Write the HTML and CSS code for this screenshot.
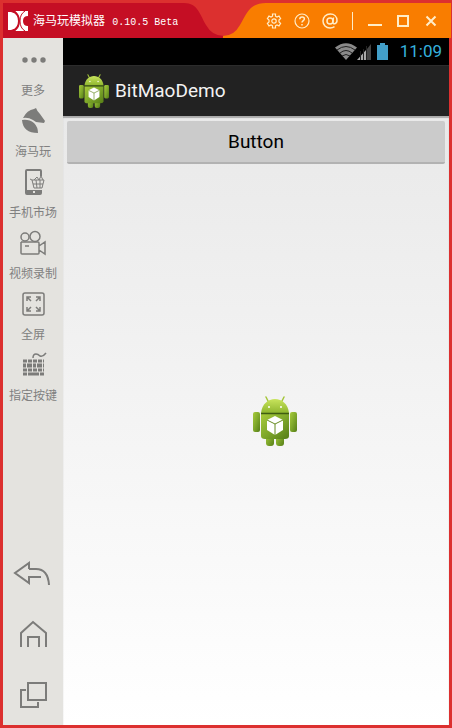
FILE: index.html
```html
<!DOCTYPE html>
<html lang="zh-CN">
  <head>
    <meta charset="UTF-8" />
    <meta name="viewport" content="width=device-width, initial-scale=1" />
    <title>海马玩模拟器</title>
    <link rel="stylesheet" href="styles.css">
  </head>
  <body>
    <!-- Shared android robot -->
    <svg class="defs" aria-hidden="true">
      <defs>
        <linearGradient id="green" x1="0" y1="0" x2="1" y2="1">
          <stop offset="0" stop-color="#a8cb3a" />
          <stop offset="0.5" stop-color="#7fa82b" />
          <stop offset="1" stop-color="#557d16" />
        </linearGradient>
        <linearGradient id="head" x1="0" y1="0" x2="0" y2="1">
          <stop offset="0" stop-color="#c8e45c" />
          <stop offset="1" stop-color="#8fb62f" />
        </linearGradient>
        <symbol id="robot" viewBox="0 0 44 50">
          <path d="M13 1l3 6M31 1l-3 6" stroke="#a5c63b" stroke-width="1.5" stroke-linecap="round" />
          <rect x="13" y="36" width="8" height="14" rx="3" fill="url(#green)" />
          <rect x="23" y="36" width="8" height="14" rx="3" fill="url(#green)" />
          <rect x="0" y="16" width="7" height="20" rx="2" fill="url(#green)" />
          <rect x="37" y="16" width="7" height="20" rx="2" fill="url(#green)" />
          <path d="M8 18h28v22q0 3-4 3H12q-4 0-4-3z" fill="url(#green)" />
          <path d="M8 17C9 8 15 3 22 3s13 5 14 14z" fill="url(#head)" />
          <path d="M8 17.500h28" stroke="#3f5d12" stroke-width="1.500" />
          <circle cx="16" cy="11" r="1" fill="#fff" />
          <circle cx="28" cy="11" r="1" fill="#fff" />
          <path d="M22 20l8 4v10l-8 5-8-5V24z" fill="#fff" />
          <path d="M14 24l8 4 8-4M22 28v11" fill="none" stroke="#678c22" />
        </symbol>
      </defs>
    </svg>

    <div class="window">
      <header class="titlebar">
        <div class="brand">
          <svg class="logo" viewBox="0 0 20 20" aria-hidden="true">
            <path d="M0 1h3q8 2 8 9t-8 9H0z" fill="#fff" />
            <path d="M7 0h13v5q-5 0-5 5t5 5v5H7q4-3 4-10T7 0z" fill="#fff" />
            <path d="M5 0q6 3 6 10T5 20" fill="none" stroke="#c50e24" stroke-width="2" />
            <path d="M17 0q-5 3-5 10t5 10" fill="none" stroke="#c50e24" stroke-width="1" />
          </svg>
          <h1>海马玩模拟器 <span>0.10.5 Beta</span></h1>
        </div>
        <svg class="swoosh" viewBox="0 0 88 35" aria-hidden="true">
          <path d="M0 0h6C20 0 22 12 28 22Q34 33 46 33v2H0z" fill="#c50e24" />
          <path d="M88 0C72 0 69 10 62 22Q56 33 45 33v2h43z" fill="#f97d00" />
        </svg>
        <div class="tools">
          <button aria-label="设置">
            <svg viewBox="0 0 16 16"><path d="M6.500 1h3v2.200l1.500.8 2-1 1.600 2.700L13 7v2l1.600 1.300L13 13l-2-1-1.500.8V15h-3v-2.200L5 12l-2 1-1.600-2.700L3 9V7L1.400 5.700 3 3l2 1 1.500-.8z" stroke-width="1.200" /><circle cx="8" cy="8" r="2.200" stroke-width="1.200" /></svg>
          </button>
          <button aria-label="帮助">
            <svg viewBox="0 0 16 16"><circle cx="8" cy="8" r="7" stroke-width="1.200" /><path d="M5.800 6.200c0-3 4.600-2.800 4.600-.2 0 1.600-2.400 1.700-2.400 3.600M8 11v1.500" stroke-width="1.500" /></svg>
          </button>
          <button aria-label="联系">
            <svg viewBox="0 0 16 16"><circle cx="8" cy="8" r="3" stroke-width="1.500" /><path d="M11.500 4.500L10.800 9c0 3 4.200 2 4.200-1.500C15 3.500 12 1 8.300 1 4 1 1 4 1 8s3 7 7 7q2.500 0 4.500-1.300" stroke-width="1.500" /></svg>
          </button>
          <span class="divider"></span>
          <button aria-label="最小化">
            <svg viewBox="0 0 16 16"><path d="M1 12h14" stroke-width="2" /></svg>
          </button>
          <button aria-label="最大化">
            <svg viewBox="0 0 16 16"><path d="M3 3h10v10H3z" stroke-width="2" /></svg>
          </button>
          <button aria-label="关闭">
            <svg viewBox="0 0 16 16"><path d="M3.500 3.500l9 9M12.500 3.500l-9 9" stroke-width="2" /></svg>
          </button>
        </div>
      </header>

      <div class="body">
        <aside class="sidebar">
          <nav class="menu">
            <button>
              <svg viewBox="0 0 28 24" class="solid"><circle cx="6" cy="12" r="2.700" /><circle cx="15" cy="12" r="2.700" /><circle cx="24" cy="12" r="2.700" /></svg>
              更多
            </button>
            <button>
              <svg viewBox="0 0 28 24" class="solid"><path d="M4 9Q8 1 15 0l2-1q1 3 4 6l5 7-1 2-8-1-3-2q-5-3-10-2zM3 11q7-1 12 3 4 4 4 10Q4 24 3 11z" /></svg>
              海马玩
            </button>
            <button>
              <svg viewBox="0 0 28 24"><path d="M22 6V1q0-1-1-1H8Q7 0 7 1v22q0 1 1 1h13q1 0 1-1v-3" stroke-width="2" /><path d="M7 22h15" stroke-width="4" /><path d="M11 9l2 1 2 8h8l2-8H13M14 14h10M17 10l1 8M21 10v8M15 10l3-3 2 3 2-4 2 4" /><path d="M14 22h2" stroke="#e4e3df" stroke-width="2" /></svg>
              手机市场
            </button>
            <button>
              <svg viewBox="0 0 28 24"><circle cx="6" cy="6" r="4" stroke-width="1.500" /><circle cx="16" cy="5.500" r="5" stroke-width="1.500" /><path d="M2 11h17q1 0 1 1v10q0 1-1 1H3q-1 0-1-1V11M20 15l6-4v12l-6-4M6 15h4" stroke-width="1.500" /></svg>
              视频录制
            </button>
            <button>
              <svg viewBox="0 0 28 24"><rect x="4" y="1" width="21" height="22" rx="2" stroke-width="1.500" /><path d="M8 9V5h4M8 5l4 4M17 5h4v4M21 5l-4 4M8 15v4h4M8 19l4-4M17 19h4v-4M21 19l-4-4" stroke-width="1.500" /></svg>
              全屏
            </button>
            <button>
              <svg viewBox="0 0 28 24"><path d="M14 5q0-4 3-4 2 0 4 2 3 1 6-3" stroke-width="1.500" /><path d="M4 8h21M4 17h21" stroke-width="3" stroke-dasharray="4 1" /><path d="M4 12.500h21" stroke-width="4" stroke-dasharray="3 1 5 1" /><path d="M4 21h4M9 21h11M21 21h4" stroke-width="3" /></svg>
              指定按键
            </button>
          </nav>
          <nav class="keys">
            <button aria-label="返回">
              <svg viewBox="0 0 38 28"><path d="M17 10V4L3 14l14 10v-6h12M17 10h7q12 0 13 16" /></svg>
            </button>
            <button aria-label="主页">
              <svg viewBox="0 0 38 28"><path d="M9 27V13L21 2l13 11v14M16 27V17h11v10" /></svg>
            </button>
            <button aria-label="最近任务">
              <svg viewBox="0 0 38 28"><path d="M16 2h18v17H16zM14 9H9v17h17v-5" /></svg>
            </button>
          </nav>
        </aside>

        <main class="phone">
          <div class="status">
            <svg class="wifi" viewBox="0 0 22 17" aria-hidden="true"><path d="M0 4.500Q11-4 22 4.500L11 17z" fill="#8a8a8a" /><path d="M2 7q9-7 18 0M5 10q6-5 12 0M7 13q4-3 8 0" fill="none" stroke="#222" /></svg>
            <svg class="signal" viewBox="0 0 14 17" aria-hidden="true"><path d="M0 17L9 7v10z" fill="#aaa" /><path d="M10 6l4-5v16h-4z" fill="#444" /><path d="M3.500 17V8M6.500 17V6M9.500 17V3" stroke="#222" /></svg>
            <svg class="battery" viewBox="0 0 11 17" aria-hidden="true"><path d="M3 0h5v2h3v15H0V2h3z" fill="#429fc9" /></svg>
            <time>11:09</time>
          </div>
          <div class="actionbar">
            <svg class="app-icon"><use href="#robot" /></svg>
            <h2>BitMaoDemo</h2>
          </div>
          <div class="screen">
            <button class="android-button">Button</button>
            <svg class="picture" role="img" aria-label="Android"><use href="#robot" /></svg>
          </div>
        </main>
      </div>
    </div>
  </body>
</html>
```
FILE: styles.css
```css
* {
  box-sizing: border-box;
}

body {
  margin: 0;
  font-family: "Noto Sans CJK SC", sans-serif;
}

h1,
h2 {
  margin: 0;
  font-weight: normal;
}

button {
  border: 0;
  padding: 0;
  background: none;
  font: inherit;
  color: inherit;
}

svg {
  display: block;
  flex: none;
}

.defs {
  position: absolute;
  width: 0;
  height: 0;
}

.window {
  display: flex;
  flex-direction: column;
  min-height: 100vh;
  border: 3px solid #dc302f;
}

/* Title bar */
.titlebar {
  display: flex;
  height: 35px;
  background: #dc302f;
}

.brand {
  display: flex;
  align-items: center;
  gap: 5px;
  padding-left: 5px;
  width: 179px;
  background: #c50e24;
  color: #fff;
}

.logo {
  width: 20px;
  height: 20px;
}

.brand h1 {
  padding-top: 4px;
  font-size: 12px;
  line-height: 16px;
  white-space: nowrap;
  font-family: "Liberation Mono", "Noto Sans CJK SC", monospace;
}

.brand span {
  font-size: 10px;
}

.swoosh {
  width: 88px;
  height: 35px;
}

.tools {
  flex: 1;
  display: flex;
  align-items: center;
  justify-content: flex-end;
  gap: 12px;
  padding-right: 12px;
  background: #f97d00;
}

.tools svg {
  width: 16px;
  height: 16px;
  fill: none;
  stroke: #ffedc8;
}

.divider {
  width: 1px;
  height: 18px;
  margin: 0 2px;
  background: #ffedc8;
}

.body {
  flex: 1;
  display: flex;
}

/* Side toolbar */
.sidebar {
  display: flex;
  flex-direction: column;
  justify-content: space-between;
  width: 60px;
  padding: 10px 0 16px;
  background: #e4e3df;
  color: #808080;
}

.menu {
  display: flex;
  flex-direction: column;
  gap: 11px;
}

.menu button {
  display: flex;
  flex-direction: column;
  align-items: center;
  gap: 10px;
  font-size: 12px;
  line-height: 16px;
}

.sidebar svg {
  fill: none;
  stroke: #7c7c7a;
  overflow: visible;
}

.menu svg {
  width: 28px;
  height: 24px;
}

.sidebar .solid {
  fill: #7c7c7a;
  stroke: none;
}

.keys {
  display: flex;
  flex-direction: column;
  gap: 33px;
  padding-left: 9px;
}

.keys svg {
  width: 38px;
  height: 28px;
  stroke-width: 2;
}

/* Android screen */
.phone {
  flex: 1;
  display: flex;
  flex-direction: column;
  font-family: Roboto, sans-serif;
}

.status {
  display: flex;
  align-items: center;
  justify-content: flex-end;
  height: 27px;
  padding-right: 7px;
  background: #000;
  color: #35b1dd;
}

.wifi {
  width: 22px;
  height: 17px;
}

.signal {
  width: 14px;
  height: 17px;
}

.battery {
  width: 11px;
  height: 17px;
  margin: 0 12px 0 6px;
}

.status time {
  font-size: 17px;
  line-height: 27px;
}

.actionbar {
  display: flex;
  align-items: center;
  gap: 6px;
  height: 51px;
  padding-left: 16px;
  background: #222;
  border-top: 1px solid #2c2c2c;
  color: #f3f3f3;
}

.app-icon {
  width: 30px;
  height: 34px;
}

.actionbar h2 {
  font-size: 19px;
  line-height: 24px;
}

.screen {
  flex: 1;
  display: grid;
  padding: 5px 4px 0;
  background: linear-gradient(#e9e9e9, #fff);
  box-shadow: inset 0 2px 1px #aaa;
}

.android-button {
  grid-area: 1 / 1;
  align-self: start;
  height: 43px;
  background: #cbcbcb;
  border-bottom: 2px solid #b2b2b2;
  border-radius: 2px;
  font-size: 19px;
  color: #000;
}

.picture {
  grid-area: 1 / 1;
  place-self: center;
  width: 44px;
  height: 50px;
  margin: 0 0 4px 38px;
}
```
